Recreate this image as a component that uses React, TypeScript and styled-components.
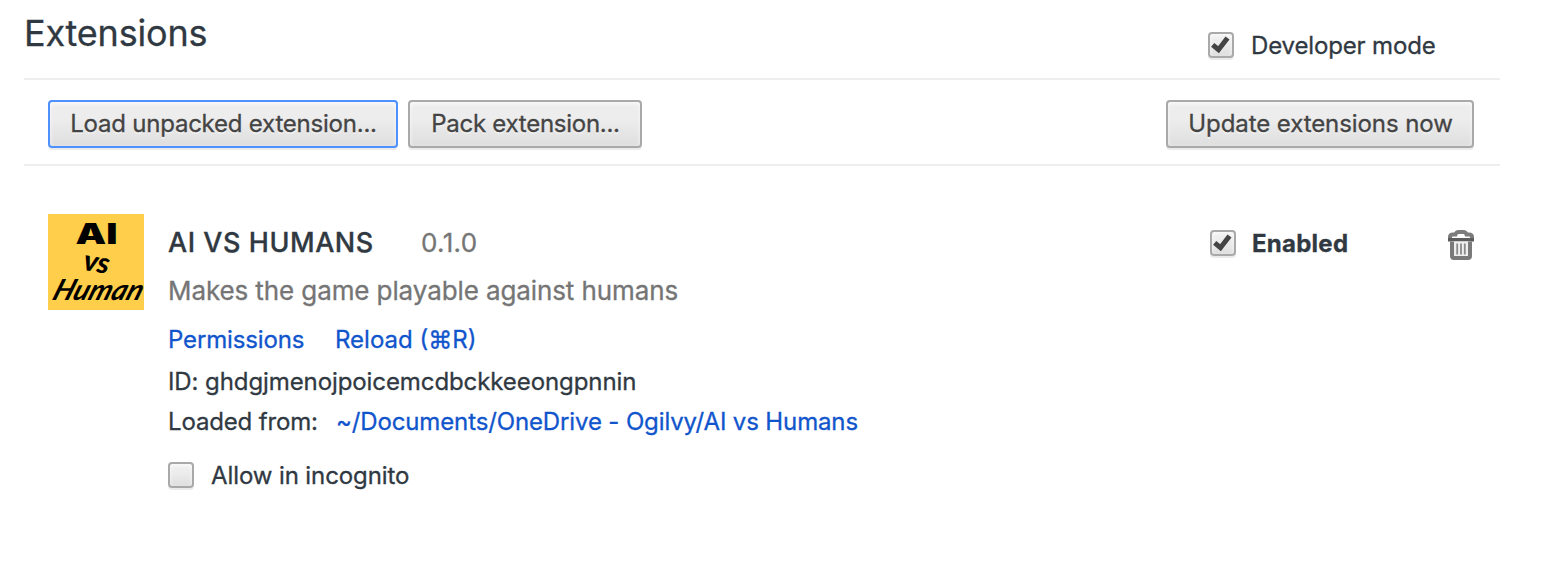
import React from "react";
import styled, { createGlobalStyle, css } from "styled-components";

const GlobalStyle = createGlobalStyle`
  * { box-sizing: border-box; }
  body {
    margin: 0;
    background: #fff;
    color: #303942;
    font-family: Inter, "Liberation Sans", sans-serif;
    font-size: 24px;
    line-height: 40px;
    -webkit-text-stroke: 0.3px currentColor;
  }
`;

const Page = styled.main`
  width: 1500px;
  padding-left: 24px;
`;

const Header = styled.header`
  display: flex;
  justify-content: space-between;
  height: 80px;
  border-bottom: 2px solid #eee;
`;

const Title = styled.h1`
  margin: 9px 0 0;
  height: 48px;
  font-size: 36px;
  line-height: 48px;
  font-weight: 400;
  letter-spacing: -0.2px;
`;

const Toolbar = styled.div`
  display: flex;
  gap: 10px;
  height: 86px;
  padding: 20px 26px 0 24px;
  border-bottom: 2px solid #eee;
`;

const surface = css`
  border: 2px solid #a9a9a9;
  background: linear-gradient(#ededed, #ededed 38%, #dedede);
  box-shadow: 0 2px 0 rgba(0, 0, 0, 0.08), inset 0 2px 4px rgba(255, 255, 255, 0.75);
`;

const Button = styled.button<{ $width: number; $focused?: boolean; $end?: boolean; $spacing: number }>`
  ${surface}
  width: ${(p) => p.$width}px;
  height: 48px;
  padding: 0 0 0 1px;
  border-radius: 4px;
  border-color: ${(p) => (p.$focused ? "#4d90fe" : "#a9a9a9")};
  margin-left: ${(p) => (p.$end ? "auto" : "0")};
  color: #444;
  font: 400 24px/44px Inter, sans-serif;
  letter-spacing: ${(p) => p.$spacing}px;
  text-shadow: 0 2px 0 #f0f0f0;
  white-space: nowrap;
`;

const CheckLabel = styled.label<{ $gap?: number; $bold?: boolean; $spacing: number }>`
  display: flex;
  align-items: center;
  gap: ${(p) => p.$gap ?? 17}px;
  height: 40px;
  font-weight: ${(p) => (p.$bold ? 700 : 400)};
  letter-spacing: ${(p) => p.$spacing}px;
  white-space: nowrap;
`;

const LabelText = styled.span`
  padding-top: 2px;
`;

const DeveloperMode = styled.div`
  width: 292px;
  padding-top: 25px;
`;

const Box = styled.span`
  ${surface}
  display: block;
  flex: none;
  width: 26px;
  height: 26px;
  border-radius: 4px;
  svg { display: block; }
`;

const Card = styled.section`
  display: flex;
  padding: 48px 26px 0 24px;
`;

const Logo = styled.svg`
  display: block;
  width: 96px;
  height: 96px;
  flex: none;
  margin-right: 24px;
  overflow: visible;
  background: #ffcf4b;
  -webkit-text-stroke: 0;
`;

const Details = styled.div`
  flex: 1;
  padding-top: 9px;
`;

const NameRow = styled.div`
  display: flex;
  height: 40px;
  font-size: 26px;
`;

const Name = styled.h2`
  margin: 0;
  width: 253px;
  font-size: 27px;
  font-weight: 500;
  letter-spacing: 0.55px;
  white-space: nowrap;
`;

const Version = styled.span`
  color: #757575;
  letter-spacing: 0.35px;
`;

const Description = styled.p`
  margin: 8px 0 0;
  height: 40px;
  color: #757575;
  font-size: 26px;
  letter-spacing: -0.1px;
`;

const Row = styled.div<{ $top: number }>`
  display: flex;
  height: 40px;
  margin-top: ${(p) => p.$top}px;
  white-space: nowrap;
`;

const Cell = styled.span<{ $width?: number; $spacing?: number }>`
  width: ${(p) => (p.$width ? `${p.$width}px` : "auto")};
  letter-spacing: ${(p) => p.$spacing ?? 0}px;
`;

const Link = styled(Cell).attrs({ as: "a" })`
  color: #1155cc;
`;

const Actions = styled.div`
  display: flex;
  justify-content: space-between;
  width: 264px;
  padding-top: 9px;
`;

const TrashIcon = styled.svg`
  display: block;
  width: 26px;
  height: 30px;
  margin-top: 7px;
`;

const Check = ({ checked = false }: { checked?: boolean }) => (
  <Box>
    {checked && (
      <svg width="22" height="22" viewBox="0 0 22 22">
        <path d="M2.7 10.8 8.5 15.7 17.5 4" fill="none" stroke="#444" strokeWidth="5" />
      </svg>
    )}
  </Box>
);

const Trash = () => (
  <TrashIcon viewBox="0 0 26 30">
    <path d="M2 9V7Q2 4.5 5 4.5H7.5Q8.3 2 10.5 2H15.5Q17.7 2 18.5 4.5H21Q24 4.5 24 7V9" fill="#fff" stroke="#7c7c7c" strokeWidth="4" />
    <path d="M0 8H26V11.5H0Z" fill="#5c5c5c" />
    <path d="M4 11.5V26Q4 28 6 28H20Q22 28 22 26V11.5" fill="#eee" stroke="#7a7a7a" strokeWidth="4" />
    <path d="M9.2 13.5V24.5M13 13.5V24.5M16.8 13.5V24.5" stroke="#8a8a8a" strokeWidth="1.8" />
  </TrashIcon>
);

export default function App() {
  return (
    <>
      <GlobalStyle />
      <Page>
        <Header>
          <Title>Extensions</Title>
          <DeveloperMode>
            <CheckLabel $spacing={-0.15}>
              <Check checked />
              <LabelText>Developer mode</LabelText>
            </CheckLabel>
          </DeveloperMode>
        </Header>
        <Toolbar>
          <Button $width={350} $focused $spacing={-0.22}>Load unpacked extension...</Button>
          <Button $width={234} $spacing={-0.27}>Pack extension...</Button>
          <Button $width={308} $end $spacing={-0.08}>Update extensions now</Button>
        </Toolbar>
        <Card>
          <Logo viewBox="0 0 96 96">
            <text x="27.5" y="29.5" fontFamily="Inter" fontWeight="900" fontSize="28" textLength="42" lengthAdjust="spacingAndGlyphs">AI</text>
            <text x="35" y="58" fontFamily="Lato" fontStyle="italic" fontWeight="900" fontSize="29" textLength="26" lengthAdjust="spacingAndGlyphs" transform="rotate(10 48 52)">vs</text>
            <text x="0" y="0" fontFamily="Lato" fontStyle="italic" fontWeight="700" fontSize="29" textLength="89" lengthAdjust="spacingAndGlyphs" transform="translate(3 86) skewX(-20)">Human</text>
          </Logo>
          <Details>
            <NameRow>
              <Name>AI VS HUMANS</Name>
              <Version>0.1.0</Version>
            </NameRow>
            <Description>Makes the game playable against humans</Description>
            <Row $top={9}>
              <Link $width={167} $spacing={-0.15}>Permissions</Link>
              <Link>Reload (⌘R)</Link>
            </Row>
            <Row $top={2}>
              <Cell $spacing={-0.09}>ID: ghdgjmenojpoicemcdbckkeeongpnnin</Cell>
            </Row>
            <Row $top={0}>
              <Cell $width={168} $spacing={-0.15}>Loaded from:</Cell>
              <Link $spacing={-0.13}>~/Documents/OneDrive - Ogilvy/AI vs Humans</Link>
            </Row>
            <Row $top={13}>
              <CheckLabel $spacing={-0.1}>
                <Check />
                <LabelText>Allow in incognito</LabelText>
              </CheckLabel>
            </Row>
          </Details>
          <Actions>
            <CheckLabel $bold $gap={16} $spacing={0.25}>
              <Check checked />
              <LabelText>Enabled</LabelText>
            </CheckLabel>
            <Trash />
          </Actions>
        </Card>
      </Page>
    </>
  );
}
